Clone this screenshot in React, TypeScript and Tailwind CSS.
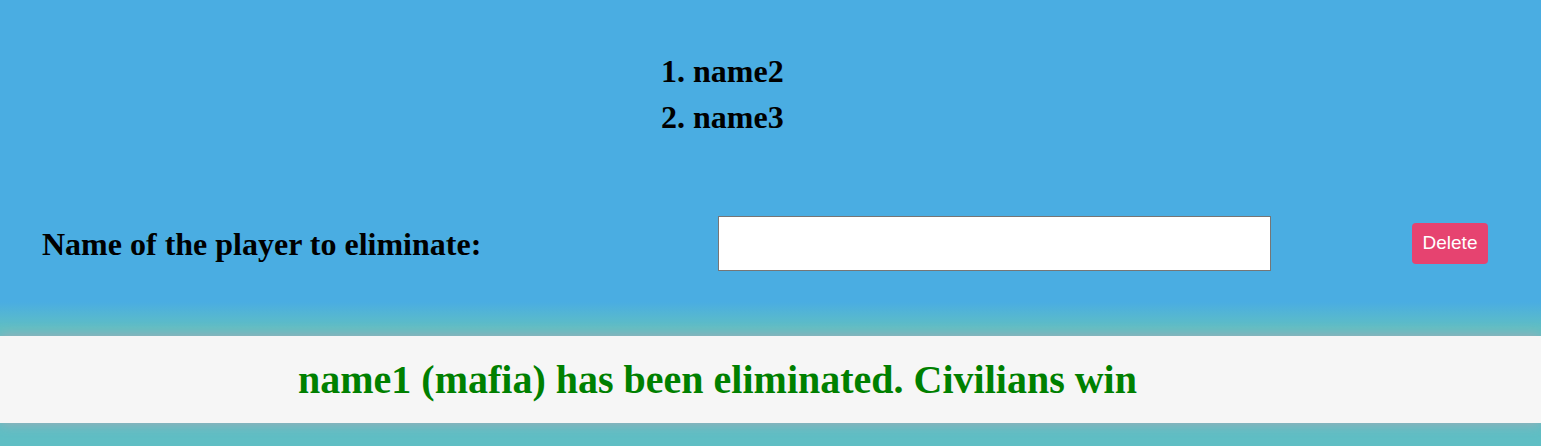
export default function App() {
  const players = ['name2', 'name3'];

  return (
    <div className="min-h-[446px] w-full overflow-hidden bg-[linear-gradient(to_bottom,#4aade2_0px,#4aade2_302px,#5fbfc3_328px,#5fbec4_100%)] font-['Liberation_Serif',serif]">
      <ol className="list-decimal list-outside pl-[693px] pt-[48px] text-[32px] font-bold leading-[46px] text-black">
        {players.map((p) => (
          <li key={p}>{p}</li>
        ))}
      </ol>

      <div className="mt-[76px] flex h-[55px] items-center">
        <label className="w-[718px] shrink-0 pl-[42px] text-[32px] font-bold text-black">
          Name of the player to eliminate:
        </label>
        <input
          type="text"
          className="h-[55px] w-[553px] shrink-0 border border-[#767676] bg-white px-2 outline-none"
        />
        <div className="ml-[141px]">
          <button className="h-[41px] w-[76px] rounded-[4px] bg-[#e64370] font-['Liberation_Sans',sans-serif] text-[19px] text-white">
            Delete
          </button>
        </div>
      </div>

      <div className="mt-[65px] flex h-[87px] items-center bg-[#f6f6f6] shadow-[0_0_12px_#a9aab6]">
        <h2 className="w-[1435px] text-center text-[40px] font-bold text-[#008000]">
          name1 (mafia) has been eliminated. Civilians win
        </h2>
      </div>
    </div>
  );
}
